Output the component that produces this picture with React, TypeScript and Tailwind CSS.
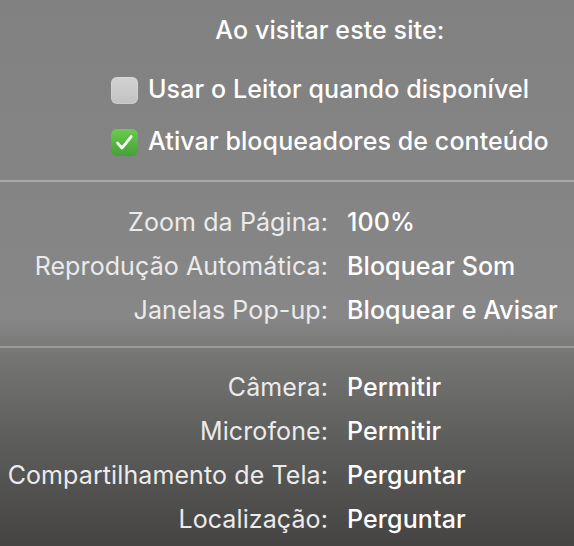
import React from "react";

const GENERAL = [
  { label: "Zoom da Página:", value: "100%" },
  { label: "Reprodução Automática:", value: "Bloquear Som" },
  { label: "Janelas Pop-up:", value: "Bloquear e Avisar" },
];

const PERMISSIONS = [
  { label: "Câmera:", value: "Permitir" },
  { label: "Microfone:", value: "Permitir" },
  { label: "Compartilhamento de Tela:", value: "Perguntar" },
  { label: "Localização:", value: "Perguntar" },
];

function Checkbox({ checked }: { checked: boolean }) {
  if (!checked) {
    return (
      <span className="w-[27px] h-[27px] rounded-[6px] bg-[linear-gradient(180deg,#d2d2d2,#c2c2c2)] shadow-[inset_0_0_0_1px_rgba(255,255,255,0.15)] shrink-0" />
    );
  }
  return (
    <span className="w-[27px] h-[27px] rounded-[6px] bg-[linear-gradient(180deg,#6ccb4e,#43a233)] flex items-center justify-center shrink-0">
      <svg width="23" height="23" viewBox="0 0 20 20" fill="none" stroke="white" strokeWidth="2.4" strokeLinecap="round" strokeLinejoin="round">
        <path d="M4 10.5l3.8 4.3 8-10" />
      </svg>
    </span>
  );
}

function Rows({ rows }: { rows: { label: string; value: string }[] }) {
  return (
    <div className="grid grid-cols-[328px_1fr] gap-x-[19px]">
      {rows.map((r) => (
        <React.Fragment key={r.label}>
          <div className="text-right text-[#ebebeb] leading-[44px] whitespace-nowrap">{r.label}</div>
          <div className="text-white font-medium leading-[44px] whitespace-nowrap">{r.value}</div>
        </React.Fragment>
      ))}
    </div>
  );
}

export default function App() {
  return (
    <div
      className="w-[574px] h-[546px] overflow-hidden flex flex-col text-[25px] tracking-[0.1px] bg-[linear-gradient(180deg,#818181_0%,#878787_58%,#747473_66%,#5e5e5d_80%,#454443_100%)]"
      style={{ fontFamily: "Inter, 'Noto Sans', sans-serif" }}
    >
      {/* Site options */}
      <div className="w-fit ml-[111px] pt-[16px] flex flex-col items-center">
        <div className="text-white font-medium leading-[28px]">Ao visitar este site:</div>
        <div className="mt-[32px] flex flex-col gap-[24px] self-start">
          <label className="flex items-center gap-[10px] h-[28px]">
            <Checkbox checked={false} />
            <span className="text-white font-medium whitespace-nowrap">Usar o Leitor quando disponível</span>
          </label>
          <label className="flex items-center gap-[10px] h-[28px]">
            <Checkbox checked />
            <span className="text-white font-medium whitespace-nowrap">Ativar bloqueadores de conteúdo</span>
          </label>
        </div>
      </div>

      <div className="mt-[24px] h-[2px] bg-[#a8a8a8] shrink-0" />

      <div className="mt-[18px]">
        <Rows rows={GENERAL} />
      </div>

      <div className="mt-[14px] h-[2px] bg-[#9b9b9a] shrink-0" />

      <div className="mt-[17px]">
        <Rows rows={PERMISSIONS} />
      </div>
    </div>
  );
}
